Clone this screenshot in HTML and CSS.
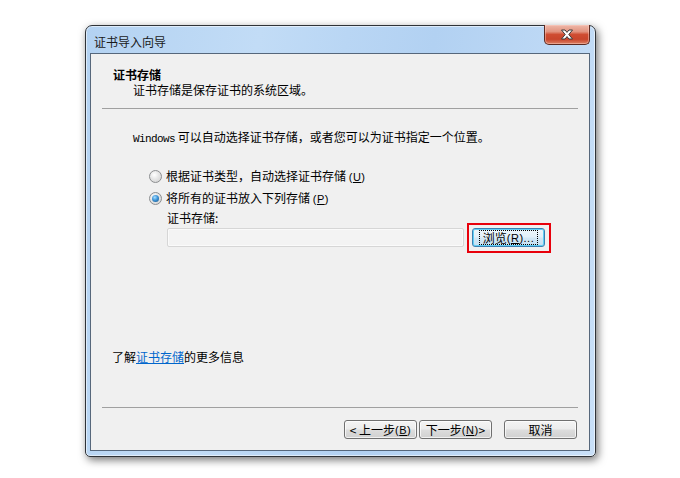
FILE: index.html
```html
<!DOCTYPE html>
<html lang="zh-CN">
<head>
<meta charset="utf-8">
<title>证书导入向导</title>
<link rel="stylesheet" href="styles.css">
</head>
<body>
<div class="window">
  <div class="titlebar">
    <div class="title">证书导入向导</div>
    <div class="close">
      <svg width="14" height="11" viewBox="0 0 14 11">
        <path d="M1.5 1 H5 L7 3.4 L9 1 H12.5 L8.8 5.5 L12.5 10 H9 L7 7.6 L5 10 H1.5 L5.2 5.5 Z" fill="#fff" stroke="#3b3b3b" stroke-width="1" stroke-linejoin="round"/>
      </svg>
    </div>
  </div>
  <div class="frame">
    <div class="client">
      <div class="header">
        <div class="h-title">证书存储</div>
        <div class="h-sub">证书存储是保存证书的系统区域。</div>
      </div>
      <div class="sep"></div>
      <div class="intro"><span class="mono">Windows</span> 可以自动选择证书存储，或者您可以为证书指定一个位置。</div>
      <div class="radio-row first">
        <span class="radio"></span>
        <span>根据证书类型，自动选择证书存储 <span class="hk">(<u>U</u>)</span></span>
      </div>
      <div class="radio-row second">
        <span class="radio checked"></span>
        <span>将所有的证书放入下列存储 <span class="hk">(<u>P</u>)</span></span>
      </div>
      <div class="store-label">证书存储:</div>
      <div class="store-row">
        <div class="field"></div>
        <div class="highlight-wrap">
          <div class="btn focused"><span class="focus-rect">浏览 <span class="hk">(<u>R</u>)...</span></span></div>
          <div class="red-box"></div>
        </div>
      </div>
      <div class="more">了解<a class="link" href="#">证书存储</a>的更多信息</div>
      <div class="sep bottom"></div>
      <div class="buttons">
        <div class="btn">&lt; 上一步 <span class="hk">(<u>B</u>)</span></div>
        <div class="btn next">下一步 <span class="hk">(<u>N</u>)</span> &gt;</div>
        <div class="btn cancel">取消</div>
      </div>
    </div>
  </div>
</div>
</body>
</html>
```

FILE: styles.css
```css
* { box-sizing: border-box; }

html, body {
  margin: 0;
  padding: 0;
  background: #ffffff;
  width: 680px;
  height: 478px;
  overflow: hidden;
}

body {
  padding: 25px 0 0 85px;
  font-family: "Noto Sans CJK SC", "Liberation Sans", sans-serif;
  font-size: 12px;
  color: #000;
}

.window {
  width: 511px;
  height: 432px;
  border: 1px solid #2f3338;
  border-radius: 7px 7px 5px 5px;
  background: linear-gradient(100deg, #b3d2f2 0%, #c2dcf6 30%, #b9d6f4 45%, #b2d1f2 60%, #c9e0f8 100%);
  box-shadow: inset 0 0 0 1px rgba(255,255,255,0.55), 2px 3px 9px rgba(0,0,0,0.55);
  display: flex;
  flex-direction: column;
}

.titlebar {
  height: 27px;
  display: flex;
  justify-content: space-between;
  align-items: flex-start;
  padding: 0 5px 0 8px;
}

.title {
  margin-top: 9px;
  line-height: 14px;
  color: #1a1a1a;
}

.close {
  width: 46px;
  height: 20px;
  margin-top: -1px;
  border: 1px solid #5b2a22;
  border-top: none;
  border-radius: 0 0 5px 5px;
  background: linear-gradient(#eeb8a9 0%, #e2937f 35%, #cf4d32 50%, #c8452c 75%, #dc8064 100%);
  box-shadow: inset 0 0 0 1px rgba(255,210,200,0.45);
  display: flex;
  align-items: center;
  justify-content: center;
}

.frame {
  flex: 1;
  padding: 0 5px 5px 4px;
  display: flex;
}

.client {
  flex: 1;
  border: 1px solid #56677b;
  background: #f0f0f0;
  display: flex;
  flex-direction: column;
  padding-bottom: 11px;
}

.header {
  padding: 14px 0 0 22px;
  line-height: 14px;
}

.h-title {
  font-weight: bold;
}

.h-sub {
  margin-top: 1px;
  padding-left: 20px;
}

.sep {
  height: 1px;
  background: #a0a0a0;
  margin: 11px 11px 0 11px;
}

.intro {
  margin-top: 21px;
  padding-left: 42px;
  line-height: 14px;
  height: 14px;
}

.mono {
  font-family: "Liberation Mono", monospace;
  font-size: 11px;
  letter-spacing: -0.6px;
}

.hk {
  font-family: "Liberation Sans", sans-serif;
  font-size: 11px;
  letter-spacing: 0.5px;
}

.radio-row {
  display: flex;
  align-items: center;
  gap: 4px;
  padding-left: 58px;
  line-height: 14px;
  height: 14px;
}

.radio-row.first { margin-top: 25px; }
.radio-row.second { margin-top: 8px; }

.radio {
  width: 13px;
  height: 13px;
  border-radius: 50%;
  border: 1px solid #8c8e90;
  background: radial-gradient(circle at 40% 35%, #ffffff 0%, #e6e6e6 45%, #cfcfcf 100%);
  display: flex;
  align-items: center;
  justify-content: center;
  flex: none;
}

.radio.checked::after {
  content: "";
  width: 7px;
  height: 7px;
  border-radius: 50%;
  background: radial-gradient(circle at 40% 35%, #a8e0ff 0%, #3f94d8 45%, #12507f 100%);
}

.store-label {
  margin-top: 6px;
  padding-left: 76px;
  line-height: 14px;
  height: 14px;
}

.store-row {
  margin-top: 3px;
  padding-left: 76px;
  display: flex;
  align-items: flex-start;
  gap: 8px;
}

.field {
  width: 297px;
  height: 19px;
  border: 1px solid #d6d6d6;
  border-radius: 2px;
  background: #f3f3f3;
  box-shadow: inset 0 0 0 1px #fafafa;
}

.highlight-wrap {
  position: relative;
}

.red-box {
  position: absolute;
  left: -5px;
  top: -5px;
  right: -6px;
  bottom: -6px;
  border: 2px solid #e8000b;
}

.btn {
  width: 73px;
  height: 19px;
  border: 1px solid #707070;
  border-radius: 3px;
  background: linear-gradient(#f4f4f4 0%, #ececec 48%, #dddddd 52%, #d0d0d0 100%);
  box-shadow: inset 0 0 0 1px rgba(255,255,255,0.7);
  display: flex;
  align-items: center;
  justify-content: center;
  line-height: 14px;
  white-space: nowrap;
}

.btn.focused {
  border-color: #3c7fb1;
  box-shadow: inset 0 0 0 1px #60cff5;
  background: linear-gradient(#eef7fc 0%, #e2f0f9 48%, #d3e8f6 52%, #c6e0f2 100%);
}

.focus-rect {
  border: 1px dotted #000;
  padding: 0 3px;
  line-height: 12px;
  height: 15px;
  display: flex;
  align-items: center;
}

.more {
  margin-top: auto;
  padding-left: 21px;
  line-height: 14px;
}

.link {
  color: #0066cc;
  text-decoration: underline;
}

.sep.bottom {
  margin-top: 43px;
}

.buttons {
  margin-top: 12px;
  padding-right: 12px;
  display: flex;
  justify-content: flex-end;
  gap: 2px;
}

.btn.cancel {
  margin-left: 10px;
}
```
